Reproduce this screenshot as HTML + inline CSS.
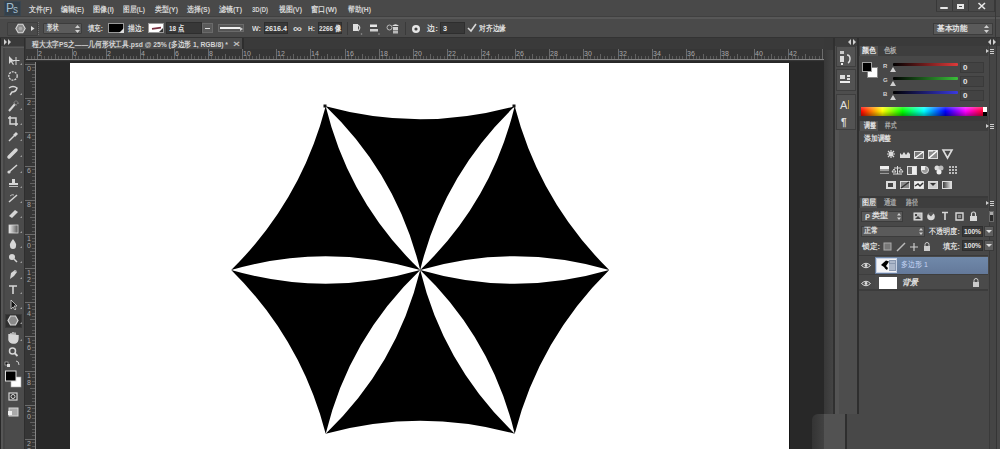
<!DOCTYPE html>
<html><head><meta charset="utf-8">
<style>
*{margin:0;padding:0;box-sizing:border-box}
html,body{width:1000px;height:449px;overflow:hidden;background:#282828;font-family:"Liberation Sans",sans-serif;color:#d8d8d8;position:relative}
.a{position:absolute}
.t{position:absolute;white-space:nowrap;font-weight:bold}
</style></head><body>
<div class="a" style="left:0px;top:0px;width:1000px;height:17px;background:#494949"></div>
<div class="a" style="left:0px;top:16px;width:1000px;height:1px;background:#404040"></div>
<div class="a" style="left:4px;top:1px;width:17px;height:15px;background:#34404a;border:1px solid #3a4650"></div>
<div id="t1" class="t" style="left:6px;top:1px;font-size:12px;line-height:14px;color:#a2bccc;font-weight:normal">P</div>
<div id="t2" class="t" style="left:13px;top:4px;font-size:10px;line-height:12px;color:#a2bccc;font-weight:normal">s</div>
<div id="t3" class="t" style="left:29px;top:5px;font-size:8px;line-height:10px;color:#d4d4d4;transform:scaleX(0.877);transform-origin:0 0;">文件(F)</div>
<div id="t4" class="t" style="left:61px;top:5px;font-size:8px;line-height:10px;color:#d4d4d4;transform:scaleX(0.862);transform-origin:0 0;">编辑(E)</div>
<div id="t5" class="t" style="left:93px;top:5px;font-size:8px;line-height:10px;color:#d4d4d4;transform:scaleX(0.891);transform-origin:0 0;">图像(I)</div>
<div id="t6" class="t" style="left:123px;top:5px;font-size:8px;line-height:10px;color:#d4d4d4;transform:scaleX(0.839);transform-origin:0 0;">图层(L)</div>
<div id="t7" class="t" style="left:155px;top:5px;font-size:8px;line-height:10px;color:#d4d4d4;transform:scaleX(0.862);transform-origin:0 0;">类型(Y)</div>
<div id="t8" class="t" style="left:187px;top:5px;font-size:8px;line-height:10px;color:#d4d4d4;transform:scaleX(0.862);transform-origin:0 0;">选择(S)</div>
<div id="t9" class="t" style="left:219px;top:5px;font-size:8px;line-height:10px;color:#d4d4d4;transform:scaleX(0.877);transform-origin:0 0;">滤镜(T)</div>
<div id="t10" class="t" style="left:252px;top:5px;font-size:8px;line-height:10px;color:#d4d4d4;transform:scaleX(0.750);transform-origin:0 0;">3D(D)</div>
<div id="t11" class="t" style="left:279px;top:5px;font-size:8px;line-height:10px;color:#d4d4d4;transform:scaleX(0.862);transform-origin:0 0;">视图(V)</div>
<div id="t12" class="t" style="left:311px;top:5px;font-size:8px;line-height:10px;color:#d4d4d4;transform:scaleX(0.900);transform-origin:0 0;">窗口(W)</div>
<div id="t13" class="t" style="left:348px;top:5px;font-size:8px;line-height:10px;color:#d4d4d4;transform:scaleX(0.848);transform-origin:0 0;">帮助(H)</div>
<div class="a" style="left:936px;top:0px;width:1px;height:12px;background:#383838"></div>
<div class="a" style="left:952px;top:0px;width:1px;height:12px;background:#383838"></div>
<div class="a" style="left:968px;top:0px;width:1px;height:12px;background:#383838"></div>
<div class="a" style="left:994px;top:0px;width:1px;height:12px;background:#383838"></div>
<div class="a" style="left:936px;top:11px;width:58px;height:1px;background:#3c3c3c"></div>
<div class="a" style="left:940px;top:7px;width:8px;height:2px;background:#e8e8e8;border-radius:1px"></div>
<div class="a" style="left:957px;top:4px;width:7px;height:5px;border:2px solid #e8e8e8"></div>
<svg class="a" style="left:977px;top:2px" width="10" height="8"><path d="M1.5 1 L8 7 M8 1 L1.5 7" stroke="#e8e8e8" stroke-width="1.6"/></svg>
<div class="a" style="left:0px;top:17px;width:1000px;height:21px;background:#4a4a4a;border-top:2px solid #575757;border-bottom:1px solid #333"></div>
<div class="a" style="left:7px;top:22px;width:31px;height:14px;border:1px solid #3e3e3e;border-radius:1px"></div>
<svg class="a" style="left:15px;top:23px" width="11" height="11"><path d="M3.2 1.2 L7.8 1.2 L10.2 5.5 L7.8 9.8 L3.2 9.8 L0.8 5.5Z" fill="#8a8a8a" stroke="#d6d6d6" stroke-width="1.1"/><circle cx="5.5" cy="5.5" r="1.8" fill="#a8a8a8"/></svg>
<svg class="a" style="left:31px;top:26px" width="4" height="5"><path d="M0 0 L3.5 2.5 L0 5Z" fill="#e0e0e0"/></svg>
<div class="a" style="left:38px;top:22px;width:1px;height:13px;border-left:1px dotted #707070"></div>
<div class="a" style="left:43px;top:23px;width:39px;height:11px;background:#5c5c5c;border:1px solid #3c3c3c;border-radius:1px"></div>
<div id="t14" class="t" style="left:47px;top:23px;font-size:8px;line-height:10px;color:#e0e0e0;transform:scaleX(0.688);transform-origin:0 0;">形状</div>
<svg class="a" style="left:75px;top:25px" width="5" height="8"><path d="M0 3 L2.5 0 L5 3Z M0 5 L2.5 8 L5 5Z" fill="#cfcfcf"/></svg>
<div id="t15" class="t" style="left:88px;top:24px;font-size:8px;line-height:10px;color:#dcdcdc;transform:scaleX(0.803);transform-origin:0 0;">填充:</div>
<div class="a" style="left:108px;top:23px;width:16px;height:10px;background:#000;border:1px solid #9a9a9a"></div>
<svg class="a" style="left:119px;top:28px" width="5" height="5"><path d="M5 0 L5 5 L0 5Z" fill="#ddd"/></svg>
<div id="t16" class="t" style="left:128px;top:24px;font-size:8px;line-height:10px;color:#dcdcdc;transform:scaleX(0.857);transform-origin:0 0;">描边:</div>
<div class="a" style="left:148px;top:23px;width:16px;height:10px;background:#fff;border:1px solid #9a9a9a"></div>
<svg class="a" style="left:149px;top:24px" width="14" height="8"><path d="M3 4.8 L12 3.6" stroke="#7a3040" stroke-width="1.8"/><path d="M14 4 L14 8 L10 8Z" fill="#333"/></svg>
<div class="a" style="left:166px;top:22px;width:36px;height:12px;background:#383838;border:1px solid #2e2e2e"></div>
<div id="t17" class="t" style="left:169px;top:24px;font-size:8px;line-height:10px;color:#e8e8e8;transform:scaleX(0.784);transform-origin:0 0;">18 点</div>
<div class="a" style="left:202px;top:23px;width:11px;height:10px;background:#5a5a5a;border:1px solid #6a6a6a"></div>
<div class="a" style="left:205px;top:28px;width:5px;height:1px;background:#ddd"></div>
<div class="a" style="left:218px;top:24px;width:26px;height:8px;background:#555;border:1px solid #6a6a6a"></div>
<div class="a" style="left:220px;top:27px;width:20px;height:2px;background:#f0f0f0"></div>
<svg class="a" style="left:240px;top:27px" width="3" height="4"><path d="M0 0 L3 2 L0 4Z" fill="#ccc"/></svg>
<div id="t18" class="t" style="left:252px;top:24px;font-size:8px;line-height:10px;color:#dcdcdc;transform:scaleX(0.893);transform-origin:0 0;">W:</div>
<div class="a" style="left:264px;top:22px;width:24px;height:12px;background:#383838;border:1px solid #2e2e2e"></div>
<div id="t19" class="t" style="left:265px;top:24px;font-size:8px;line-height:10px;color:#e8e8e8;transform:scaleX(0.899);transform-origin:0 0;">2616.4</div>
<div id="t20" class="t" style="left:293px;top:23px;font-size:10px;line-height:12px;color:#d8d8d8;transform:scaleX(1.260);transform-origin:0 0;">∞</div>
<div id="t21" class="t" style="left:308px;top:24px;font-size:8px;line-height:10px;color:#dcdcdc;transform:scaleX(0.828);transform-origin:0 0;">H:</div>
<div class="a" style="left:318px;top:22px;width:24px;height:12px;background:#383838;border:1px solid #2e2e2e"></div>
<div id="t22" class="t" style="left:319px;top:24px;font-size:8px;line-height:10px;color:#e8e8e8;transform:scaleX(0.785);transform-origin:0 0;">2266 像</div>
<div class="a" style="left:347px;top:22px;width:1px;height:13px;background:#3a3a3a"></div>
<svg class="a" style="left:352px;top:23px" width="12" height="12"><rect x="1" y="1" width="5" height="7" fill="#e0e0e0"/><path d="M6 2 Q9.5 4.5 6 8" stroke="#cfcfcf" stroke-width="1.3" fill="none"/><circle cx="9.5" cy="11" r="0.8" fill="#999"/></svg>
<svg class="a" style="left:368px;top:23px" width="12" height="12"><rect x="2" y="1.5" width="7" height="2.5" fill="#e6e6e6"/><rect x="2" y="6" width="8" height="2.5" fill="#d0d0d0"/><circle cx="11" cy="11" r="0.8" fill="#999"/></svg>
<svg class="a" style="left:386px;top:22px" width="14" height="13"><circle cx="3.5" cy="5.5" r="2.5" fill="none" stroke="#bbb" stroke-width="1"/><path d="M6 4 Q9.5 0.5 13 4 Z" fill="#e0e0e0"/><rect x="7" y="5" width="5" height="3" fill="#d0d0d0"/><rect x="7" y="8.5" width="5" height="3" fill="#b8b8b8"/></svg>
<div class="a" style="left:405px;top:22px;width:1px;height:13px;background:#3a3a3a"></div>
<svg class="a" style="left:411px;top:24px" width="10" height="10"><circle cx="5" cy="5" r="4" fill="#e6e6e6"/><circle cx="5" cy="5" r="1.6" fill="#444"/></svg>
<div id="t23" class="t" style="left:427px;top:24px;font-size:8px;line-height:10px;color:#dcdcdc;transform:scaleX(1.031);transform-origin:0 0;">边:</div>
<div class="a" style="left:440px;top:22px;width:25px;height:12px;background:#383838;border:1px solid #2e2e2e"></div>
<div id="t24" class="t" style="left:443px;top:24px;font-size:8px;line-height:10px;color:#e8e8e8;transform:scaleX(0.898);transform-origin:0 0;">3</div>
<svg class="a" style="left:467px;top:23px" width="10" height="10"><path d="M1 5 L4 8 L9 1" fill="none" stroke="#d8d8d8" stroke-width="1.6"/></svg>
<div id="t25" class="t" style="left:479px;top:24px;font-size:8px;line-height:10px;color:#dcdcdc;transform:scaleX(0.844);transform-origin:0 0;">对齐边缘</div>
<div class="a" style="left:933px;top:23px;width:60px;height:12px;background:#5a5a5a;border:1px solid #3c3c3c"></div>
<div id="t26" class="t" style="left:937px;top:24px;font-size:8px;line-height:10px;color:#e6e6e6;transform:scaleX(0.938);transform-origin:0 0;">基本功能</div>
<svg class="a" style="left:984px;top:25px" width="5" height="8"><path d="M0 3 L2.5 0 L5 3Z M0 5 L2.5 8 L5 5Z" fill="#cfcfcf"/></svg>
<div class="a" style="left:995px;top:0px;width:1px;height:38px;background:#383838"></div>
<div class="a" style="left:1px;top:38px;width:24px;height:411px;background:#4b4b4b"></div>
<div class="a" style="left:1px;top:38px;width:2px;height:411px;background:#565656"></div>
<div class="a" style="left:3px;top:38px;width:2px;height:411px;background:#454545"></div>
<div class="a" style="left:24px;top:38px;width:1px;height:411px;background:#2e2e2e"></div>
<div class="a" style="left:1px;top:38px;width:23px;height:8px;background:#3a3a3a"></div>
<svg class="a" style="left:4px;top:39px" width="9" height="6"><path d="M0 0 L3 3 L0 6Z M4 0 L7 3 L4 6Z" fill="#d0d0d0"/></svg>
<div class="a" style="left:3px;top:47px;width:21px;height:1px;background:#5a5a5a"></div>
<div class="a" style="left:5px;top:314px;width:17px;height:14px;background:#2f2f2f;border:1px solid #3a3a3a"></div>
<svg class="a" style="left:0;top:0" width="30" height="449"><defs><linearGradient id="gr"><stop offset="0" stop-color="#eee"/><stop offset="1" stop-color="#555"/></linearGradient></defs><path d="M9 56 L9 64 L11 62 L13 65 L14 64.3 L12 61.5 L14.5 61.5Z" fill="#d6d6d6"/><path d="M16 57 V65 M12.5 60.5 H19.5" stroke="#d6d6d6" stroke-width="1"/><circle cx="13" cy="76" r="4.2" fill="none" stroke="#d6d6d6" stroke-width="1.3" stroke-dasharray="2 1"/><path d="M9 88 Q13 85 17 88 Q16 92 12 92 L10 95" fill="none" stroke="#d6d6d6" stroke-width="1.5"/><path d="M9 111 L15 104" stroke="#d6d6d6" stroke-width="2"/><circle cx="16" cy="103" r="2" fill="none" stroke="#aaa" stroke-dasharray="1 1"/><path d="M10 116 V124 H18 M8 118 H16 V126" fill="none" stroke="#d6d6d6" stroke-width="1.5"/><path d="M9 141 L14 136" stroke="#d6d6d6" stroke-width="1.5"/><path d="M13 135 L16 132 L18 134 L15 137Z" fill="#d6d6d6"/><path d="M9 157 L16 150" stroke="#d6d6d6" stroke-width="3.5" stroke-linecap="round"/><path d="M9 172 L17 165" stroke="#d6d6d6" stroke-width="1.5"/><circle cx="9" cy="172" r="1.6" fill="#d6d6d6"/><rect x="12" y="179" width="3" height="4" fill="#d6d6d6"/><rect x="9" y="183" width="9" height="2" fill="#d6d6d6"/><rect x="9" y="186" width="9" height="1" fill="#bbb"/><path d="M9 202 L17 195" stroke="#d6d6d6" stroke-width="1.5"/><path d="M10 196 Q12 194 14 195" stroke="#bbb" fill="none"/><path d="M9 216 L15 210 L18 212 L12 218Z" fill="#d6d6d6"/><rect x="9" y="225" width="9" height="8" fill="url(#gr)" stroke="#d6d6d6" stroke-width="0.8"/><path d="M13 239 Q17 244 16 246 A3 3 0 0 1 10 246 Q9 244 13 239Z" fill="#d6d6d6"/><circle cx="12" cy="257" r="3" fill="#d6d6d6"/><path d="M14 259 L17 262" stroke="#d6d6d6" stroke-width="1.5"/><path d="M10 279 L11 273 L15 270 L17 272 L14 276Z" fill="#d6d6d6"/><circle cx="15.5" cy="271" r="1" fill="#aaa"/><path d="M9 286 H17 M13 286 V294" stroke="#d6d6d6" stroke-width="1.6"/><path d="M11 300 L11 309 L13 307 L15 310 L16 309 L14 306 L17 306Z" fill="#111" stroke="#d6d6d6" stroke-width="0.8"/><path d="M10.5 316 L15.5 316 L18 320.5 L15.5 325 L10.5 325 L8 320.5Z" fill="#8a8a8a" stroke="#d6d6d6" stroke-width="1.2"/><path d="M9 334 V340 Q10 343 13 343 H15 Q18 342 18 338 V335 M11 333 V338 M13 332 V338 M15 332.5 V338" fill="#d6d6d6" stroke="#d6d6d6" stroke-width="1.4"/><circle cx="12.5" cy="351" r="3" fill="none" stroke="#d6d6d6" stroke-width="1.5"/><path d="M14.5 353 L17.5 356" stroke="#d6d6d6" stroke-width="1.8"/><rect x="5" y="362" width="3" height="3" fill="#111" stroke="#ccc" stroke-width="0.6"/><rect x="7" y="364" width="3" height="3" fill="#ddd"/><path d="M16 361 Q19 361 19 365" stroke="#ccc" fill="none"/><rect x="11" y="377" width="10" height="10" fill="#fff" stroke="#aaa" stroke-width="0.6"/><rect x="5.5" y="371" width="10.5" height="10" fill="#000" stroke="#ddd" stroke-width="1"/><rect x="9" y="393" width="8" height="7" fill="#333" stroke="#d6d6d6" stroke-width="1.2"/><circle cx="13" cy="396.5" r="2" fill="none" stroke="#d6d6d6" stroke-width="1"/><rect x="9" y="408" width="9" height="8" fill="#aaa" stroke="#d6d6d6" stroke-width="1"/><rect x="8" y="411" width="4" height="4" fill="#eee"/><path d="M20 65 L22 63 L22 65Z" fill="#9a9a9a"/><path d="M20 95 L22 93 L22 95Z" fill="#9a9a9a"/><path d="M20 110 L22 108 L22 110Z" fill="#9a9a9a"/><path d="M20 125 L22 123 L22 125Z" fill="#9a9a9a"/><path d="M20 141 L22 139 L22 141Z" fill="#9a9a9a"/><path d="M20 157 L22 155 L22 157Z" fill="#9a9a9a"/><path d="M20 173 L22 171 L22 173Z" fill="#9a9a9a"/><path d="M20 188 L22 186 L22 188Z" fill="#9a9a9a"/><path d="M20 203 L22 201 L22 203Z" fill="#9a9a9a"/><path d="M20 218 L22 216 L22 218Z" fill="#9a9a9a"/><path d="M20 233 L22 231 L22 233Z" fill="#9a9a9a"/><path d="M20 248 L22 246 L22 248Z" fill="#9a9a9a"/><path d="M20 263 L22 261 L22 263Z" fill="#9a9a9a"/><path d="M20 279 L22 277 L22 279Z" fill="#9a9a9a"/><path d="M20 294 L22 292 L22 294Z" fill="#9a9a9a"/><path d="M20 309 L22 307 L22 309Z" fill="#9a9a9a"/><path d="M20 324 L22 322 L22 324Z" fill="#9a9a9a"/><path d="M20 341 L22 339 L22 341Z" fill="#9a9a9a"/></svg>
<div class="a" style="left:25px;top:38px;width:799px;height:11px;background:#3a3a3a"></div>
<div class="a" style="left:26px;top:38px;width:216px;height:11px;background:#4b4b4b"></div>
<div class="a" style="left:242px;top:38px;width:2px;height:11px;background:#2e2e2e"></div>
<div id="t27" class="t" style="left:32px;top:40px;font-size:8px;line-height:10px;color:#d4d4d4;transform:scaleX(0.845);transform-origin:0 0;">程大太字PS之——几何形状工具.psd @ 25% (多边形 1, RGB/8) *</div>
<div id="t28" class="t" style="left:233px;top:39px;font-size:9px;line-height:11px;color:#bdbdbd;transform:scaleX(1.329);transform-origin:0 0;">×</div>
<div class="a" style="left:25px;top:49px;width:799px;height:13px;background:#363636"></div>
<div class="a" style="left:25px;top:61px;width:799px;height:1px;background:#2a2a2a"></div>
<div class="a" style="left:25px;top:62px;width:11px;height:387px;background:#363636"></div>
<svg class="a" style="left:0;top:0" width="1000" height="449"><rect x="27" y="56" width="1" height="3" fill="#5a5a5a"/><rect x="31" y="56" width="1" height="3" fill="#5a5a5a"/><rect x="34" y="56" width="1" height="3" fill="#5a5a5a"/><rect x="37" y="49" width="1" height="10" fill="#6c6c6c"/><rect x="41" y="56" width="1" height="3" fill="#5a5a5a"/><rect x="44" y="56" width="1" height="3" fill="#5a5a5a"/><rect x="48" y="56" width="1" height="3" fill="#5a5a5a"/><rect x="51" y="56" width="1" height="3" fill="#5a5a5a"/><rect x="55" y="54" width="1" height="5" fill="#626262"/><rect x="58" y="56" width="1" height="3" fill="#5a5a5a"/><rect x="61" y="56" width="1" height="3" fill="#5a5a5a"/><rect x="65" y="56" width="1" height="3" fill="#5a5a5a"/><rect x="68" y="56" width="1" height="3" fill="#5a5a5a"/><rect x="72" y="49" width="1" height="10" fill="#6c6c6c"/><rect x="75" y="56" width="1" height="3" fill="#5a5a5a"/><rect x="78" y="56" width="1" height="3" fill="#5a5a5a"/><rect x="82" y="56" width="1" height="3" fill="#5a5a5a"/><rect x="85" y="56" width="1" height="3" fill="#5a5a5a"/><rect x="89" y="54" width="1" height="5" fill="#626262"/><rect x="92" y="56" width="1" height="3" fill="#5a5a5a"/><rect x="95" y="56" width="1" height="3" fill="#5a5a5a"/><rect x="99" y="56" width="1" height="3" fill="#5a5a5a"/><rect x="102" y="56" width="1" height="3" fill="#5a5a5a"/><rect x="106" y="49" width="1" height="10" fill="#6c6c6c"/><rect x="109" y="56" width="1" height="3" fill="#5a5a5a"/><rect x="113" y="56" width="1" height="3" fill="#5a5a5a"/><rect x="116" y="56" width="1" height="3" fill="#5a5a5a"/><rect x="119" y="56" width="1" height="3" fill="#5a5a5a"/><rect x="123" y="54" width="1" height="5" fill="#626262"/><rect x="126" y="56" width="1" height="3" fill="#5a5a5a"/><rect x="130" y="56" width="1" height="3" fill="#5a5a5a"/><rect x="133" y="56" width="1" height="3" fill="#5a5a5a"/><rect x="136" y="56" width="1" height="3" fill="#5a5a5a"/><rect x="140" y="49" width="1" height="10" fill="#6c6c6c"/><rect x="143" y="56" width="1" height="3" fill="#5a5a5a"/><rect x="147" y="56" width="1" height="3" fill="#5a5a5a"/><rect x="150" y="56" width="1" height="3" fill="#5a5a5a"/><rect x="153" y="56" width="1" height="3" fill="#5a5a5a"/><rect x="157" y="54" width="1" height="5" fill="#626262"/><rect x="160" y="56" width="1" height="3" fill="#5a5a5a"/><rect x="164" y="56" width="1" height="3" fill="#5a5a5a"/><rect x="167" y="56" width="1" height="3" fill="#5a5a5a"/><rect x="171" y="56" width="1" height="3" fill="#5a5a5a"/><rect x="174" y="49" width="1" height="10" fill="#6c6c6c"/><rect x="177" y="56" width="1" height="3" fill="#5a5a5a"/><rect x="181" y="56" width="1" height="3" fill="#5a5a5a"/><rect x="184" y="56" width="1" height="3" fill="#5a5a5a"/><rect x="188" y="56" width="1" height="3" fill="#5a5a5a"/><rect x="191" y="54" width="1" height="5" fill="#626262"/><rect x="194" y="56" width="1" height="3" fill="#5a5a5a"/><rect x="198" y="56" width="1" height="3" fill="#5a5a5a"/><rect x="201" y="56" width="1" height="3" fill="#5a5a5a"/><rect x="205" y="56" width="1" height="3" fill="#5a5a5a"/><rect x="208" y="49" width="1" height="10" fill="#6c6c6c"/><rect x="211" y="56" width="1" height="3" fill="#5a5a5a"/><rect x="215" y="56" width="1" height="3" fill="#5a5a5a"/><rect x="218" y="56" width="1" height="3" fill="#5a5a5a"/><rect x="222" y="56" width="1" height="3" fill="#5a5a5a"/><rect x="225" y="54" width="1" height="5" fill="#626262"/><rect x="229" y="56" width="1" height="3" fill="#5a5a5a"/><rect x="232" y="56" width="1" height="3" fill="#5a5a5a"/><rect x="235" y="56" width="1" height="3" fill="#5a5a5a"/><rect x="239" y="56" width="1" height="3" fill="#5a5a5a"/><rect x="242" y="49" width="1" height="10" fill="#6c6c6c"/><rect x="246" y="56" width="1" height="3" fill="#5a5a5a"/><rect x="249" y="56" width="1" height="3" fill="#5a5a5a"/><rect x="252" y="56" width="1" height="3" fill="#5a5a5a"/><rect x="256" y="56" width="1" height="3" fill="#5a5a5a"/><rect x="259" y="54" width="1" height="5" fill="#626262"/><rect x="263" y="56" width="1" height="3" fill="#5a5a5a"/><rect x="266" y="56" width="1" height="3" fill="#5a5a5a"/><rect x="269" y="56" width="1" height="3" fill="#5a5a5a"/><rect x="273" y="56" width="1" height="3" fill="#5a5a5a"/><rect x="276" y="49" width="1" height="10" fill="#6c6c6c"/><rect x="280" y="56" width="1" height="3" fill="#5a5a5a"/><rect x="283" y="56" width="1" height="3" fill="#5a5a5a"/><rect x="287" y="56" width="1" height="3" fill="#5a5a5a"/><rect x="290" y="56" width="1" height="3" fill="#5a5a5a"/><rect x="293" y="54" width="1" height="5" fill="#626262"/><rect x="297" y="56" width="1" height="3" fill="#5a5a5a"/><rect x="300" y="56" width="1" height="3" fill="#5a5a5a"/><rect x="304" y="56" width="1" height="3" fill="#5a5a5a"/><rect x="307" y="56" width="1" height="3" fill="#5a5a5a"/><rect x="310" y="49" width="1" height="10" fill="#6c6c6c"/><rect x="314" y="56" width="1" height="3" fill="#5a5a5a"/><rect x="317" y="56" width="1" height="3" fill="#5a5a5a"/><rect x="321" y="56" width="1" height="3" fill="#5a5a5a"/><rect x="324" y="56" width="1" height="3" fill="#5a5a5a"/><rect x="327" y="54" width="1" height="5" fill="#626262"/><rect x="331" y="56" width="1" height="3" fill="#5a5a5a"/><rect x="334" y="56" width="1" height="3" fill="#5a5a5a"/><rect x="338" y="56" width="1" height="3" fill="#5a5a5a"/><rect x="341" y="56" width="1" height="3" fill="#5a5a5a"/><rect x="345" y="49" width="1" height="10" fill="#6c6c6c"/><rect x="348" y="56" width="1" height="3" fill="#5a5a5a"/><rect x="351" y="56" width="1" height="3" fill="#5a5a5a"/><rect x="355" y="56" width="1" height="3" fill="#5a5a5a"/><rect x="358" y="56" width="1" height="3" fill="#5a5a5a"/><rect x="362" y="54" width="1" height="5" fill="#626262"/><rect x="365" y="56" width="1" height="3" fill="#5a5a5a"/><rect x="368" y="56" width="1" height="3" fill="#5a5a5a"/><rect x="372" y="56" width="1" height="3" fill="#5a5a5a"/><rect x="375" y="56" width="1" height="3" fill="#5a5a5a"/><rect x="379" y="49" width="1" height="10" fill="#6c6c6c"/><rect x="382" y="56" width="1" height="3" fill="#5a5a5a"/><rect x="386" y="56" width="1" height="3" fill="#5a5a5a"/><rect x="389" y="56" width="1" height="3" fill="#5a5a5a"/><rect x="392" y="56" width="1" height="3" fill="#5a5a5a"/><rect x="396" y="54" width="1" height="5" fill="#626262"/><rect x="399" y="56" width="1" height="3" fill="#5a5a5a"/><rect x="403" y="56" width="1" height="3" fill="#5a5a5a"/><rect x="406" y="56" width="1" height="3" fill="#5a5a5a"/><rect x="409" y="56" width="1" height="3" fill="#5a5a5a"/><rect x="413" y="49" width="1" height="10" fill="#6c6c6c"/><rect x="416" y="56" width="1" height="3" fill="#5a5a5a"/><rect x="420" y="56" width="1" height="3" fill="#5a5a5a"/><rect x="423" y="56" width="1" height="3" fill="#5a5a5a"/><rect x="426" y="56" width="1" height="3" fill="#5a5a5a"/><rect x="430" y="54" width="1" height="5" fill="#626262"/><rect x="433" y="56" width="1" height="3" fill="#5a5a5a"/><rect x="437" y="56" width="1" height="3" fill="#5a5a5a"/><rect x="440" y="56" width="1" height="3" fill="#5a5a5a"/><rect x="444" y="56" width="1" height="3" fill="#5a5a5a"/><rect x="447" y="49" width="1" height="10" fill="#6c6c6c"/><rect x="450" y="56" width="1" height="3" fill="#5a5a5a"/><rect x="454" y="56" width="1" height="3" fill="#5a5a5a"/><rect x="457" y="56" width="1" height="3" fill="#5a5a5a"/><rect x="461" y="56" width="1" height="3" fill="#5a5a5a"/><rect x="464" y="54" width="1" height="5" fill="#626262"/><rect x="467" y="56" width="1" height="3" fill="#5a5a5a"/><rect x="471" y="56" width="1" height="3" fill="#5a5a5a"/><rect x="474" y="56" width="1" height="3" fill="#5a5a5a"/><rect x="478" y="56" width="1" height="3" fill="#5a5a5a"/><rect x="481" y="49" width="1" height="10" fill="#6c6c6c"/><rect x="484" y="56" width="1" height="3" fill="#5a5a5a"/><rect x="488" y="56" width="1" height="3" fill="#5a5a5a"/><rect x="491" y="56" width="1" height="3" fill="#5a5a5a"/><rect x="495" y="56" width="1" height="3" fill="#5a5a5a"/><rect x="498" y="54" width="1" height="5" fill="#626262"/><rect x="502" y="56" width="1" height="3" fill="#5a5a5a"/><rect x="505" y="56" width="1" height="3" fill="#5a5a5a"/><rect x="508" y="56" width="1" height="3" fill="#5a5a5a"/><rect x="512" y="56" width="1" height="3" fill="#5a5a5a"/><rect x="515" y="49" width="1" height="10" fill="#6c6c6c"/><rect x="519" y="56" width="1" height="3" fill="#5a5a5a"/><rect x="522" y="56" width="1" height="3" fill="#5a5a5a"/><rect x="525" y="56" width="1" height="3" fill="#5a5a5a"/><rect x="529" y="56" width="1" height="3" fill="#5a5a5a"/><rect x="532" y="54" width="1" height="5" fill="#626262"/><rect x="536" y="56" width="1" height="3" fill="#5a5a5a"/><rect x="539" y="56" width="1" height="3" fill="#5a5a5a"/><rect x="542" y="56" width="1" height="3" fill="#5a5a5a"/><rect x="546" y="56" width="1" height="3" fill="#5a5a5a"/><rect x="549" y="49" width="1" height="10" fill="#6c6c6c"/><rect x="553" y="56" width="1" height="3" fill="#5a5a5a"/><rect x="556" y="56" width="1" height="3" fill="#5a5a5a"/><rect x="560" y="56" width="1" height="3" fill="#5a5a5a"/><rect x="563" y="56" width="1" height="3" fill="#5a5a5a"/><rect x="566" y="54" width="1" height="5" fill="#626262"/><rect x="570" y="56" width="1" height="3" fill="#5a5a5a"/><rect x="573" y="56" width="1" height="3" fill="#5a5a5a"/><rect x="577" y="56" width="1" height="3" fill="#5a5a5a"/><rect x="580" y="56" width="1" height="3" fill="#5a5a5a"/><rect x="583" y="49" width="1" height="10" fill="#6c6c6c"/><rect x="587" y="56" width="1" height="3" fill="#5a5a5a"/><rect x="590" y="56" width="1" height="3" fill="#5a5a5a"/><rect x="594" y="56" width="1" height="3" fill="#5a5a5a"/><rect x="597" y="56" width="1" height="3" fill="#5a5a5a"/><rect x="600" y="54" width="1" height="5" fill="#626262"/><rect x="604" y="56" width="1" height="3" fill="#5a5a5a"/><rect x="607" y="56" width="1" height="3" fill="#5a5a5a"/><rect x="611" y="56" width="1" height="3" fill="#5a5a5a"/><rect x="614" y="56" width="1" height="3" fill="#5a5a5a"/><rect x="618" y="49" width="1" height="10" fill="#6c6c6c"/><rect x="621" y="56" width="1" height="3" fill="#5a5a5a"/><rect x="624" y="56" width="1" height="3" fill="#5a5a5a"/><rect x="628" y="56" width="1" height="3" fill="#5a5a5a"/><rect x="631" y="56" width="1" height="3" fill="#5a5a5a"/><rect x="635" y="54" width="1" height="5" fill="#626262"/><rect x="638" y="56" width="1" height="3" fill="#5a5a5a"/><rect x="641" y="56" width="1" height="3" fill="#5a5a5a"/><rect x="645" y="56" width="1" height="3" fill="#5a5a5a"/><rect x="648" y="56" width="1" height="3" fill="#5a5a5a"/><rect x="652" y="49" width="1" height="10" fill="#6c6c6c"/><rect x="655" y="56" width="1" height="3" fill="#5a5a5a"/><rect x="658" y="56" width="1" height="3" fill="#5a5a5a"/><rect x="662" y="56" width="1" height="3" fill="#5a5a5a"/><rect x="665" y="56" width="1" height="3" fill="#5a5a5a"/><rect x="669" y="54" width="1" height="5" fill="#626262"/><rect x="672" y="56" width="1" height="3" fill="#5a5a5a"/><rect x="676" y="56" width="1" height="3" fill="#5a5a5a"/><rect x="679" y="56" width="1" height="3" fill="#5a5a5a"/><rect x="682" y="56" width="1" height="3" fill="#5a5a5a"/><rect x="686" y="49" width="1" height="10" fill="#6c6c6c"/><rect x="689" y="56" width="1" height="3" fill="#5a5a5a"/><rect x="693" y="56" width="1" height="3" fill="#5a5a5a"/><rect x="696" y="56" width="1" height="3" fill="#5a5a5a"/><rect x="699" y="56" width="1" height="3" fill="#5a5a5a"/><rect x="703" y="54" width="1" height="5" fill="#626262"/><rect x="706" y="56" width="1" height="3" fill="#5a5a5a"/><rect x="710" y="56" width="1" height="3" fill="#5a5a5a"/><rect x="713" y="56" width="1" height="3" fill="#5a5a5a"/><rect x="716" y="56" width="1" height="3" fill="#5a5a5a"/><rect x="720" y="49" width="1" height="10" fill="#6c6c6c"/><rect x="723" y="56" width="1" height="3" fill="#5a5a5a"/><rect x="727" y="56" width="1" height="3" fill="#5a5a5a"/><rect x="730" y="56" width="1" height="3" fill="#5a5a5a"/><rect x="734" y="56" width="1" height="3" fill="#5a5a5a"/><rect x="737" y="54" width="1" height="5" fill="#626262"/><rect x="740" y="56" width="1" height="3" fill="#5a5a5a"/><rect x="744" y="56" width="1" height="3" fill="#5a5a5a"/><rect x="747" y="56" width="1" height="3" fill="#5a5a5a"/><rect x="751" y="56" width="1" height="3" fill="#5a5a5a"/><rect x="754" y="49" width="1" height="10" fill="#6c6c6c"/><rect x="757" y="56" width="1" height="3" fill="#5a5a5a"/><rect x="761" y="56" width="1" height="3" fill="#5a5a5a"/><rect x="764" y="56" width="1" height="3" fill="#5a5a5a"/><rect x="768" y="56" width="1" height="3" fill="#5a5a5a"/><rect x="771" y="54" width="1" height="5" fill="#626262"/><rect x="774" y="56" width="1" height="3" fill="#5a5a5a"/><rect x="778" y="56" width="1" height="3" fill="#5a5a5a"/><rect x="781" y="56" width="1" height="3" fill="#5a5a5a"/><rect x="785" y="56" width="1" height="3" fill="#5a5a5a"/><rect x="788" y="49" width="1" height="10" fill="#6c6c6c"/><rect x="792" y="56" width="1" height="3" fill="#5a5a5a"/><rect x="795" y="56" width="1" height="3" fill="#5a5a5a"/><rect x="798" y="56" width="1" height="3" fill="#5a5a5a"/><rect x="802" y="56" width="1" height="3" fill="#5a5a5a"/><rect x="805" y="54" width="1" height="5" fill="#626262"/><rect x="809" y="56" width="1" height="3" fill="#5a5a5a"/><rect x="812" y="56" width="1" height="3" fill="#5a5a5a"/><rect x="815" y="56" width="1" height="3" fill="#5a5a5a"/><rect x="819" y="56" width="1" height="3" fill="#5a5a5a"/><rect x="822" y="49" width="1" height="10" fill="#6c6c6c"/><rect x="26" y="59" width="798" height="1" fill="#858585"/><rect x="25" y="64" width="10" height="1" fill="#6c6c6c"/><rect x="32" y="67" width="3" height="1" fill="#5a5a5a"/><rect x="32" y="70" width="3" height="1" fill="#5a5a5a"/><rect x="32" y="74" width="3" height="1" fill="#5a5a5a"/><rect x="32" y="77" width="3" height="1" fill="#5a5a5a"/><rect x="30" y="81" width="5" height="1" fill="#626262"/><rect x="32" y="84" width="3" height="1" fill="#5a5a5a"/><rect x="32" y="87" width="3" height="1" fill="#5a5a5a"/><rect x="32" y="91" width="3" height="1" fill="#5a5a5a"/><rect x="32" y="94" width="3" height="1" fill="#5a5a5a"/><rect x="25" y="98" width="10" height="1" fill="#6c6c6c"/><rect x="32" y="101" width="3" height="1" fill="#5a5a5a"/><rect x="32" y="104" width="3" height="1" fill="#5a5a5a"/><rect x="32" y="108" width="3" height="1" fill="#5a5a5a"/><rect x="32" y="111" width="3" height="1" fill="#5a5a5a"/><rect x="30" y="115" width="5" height="1" fill="#626262"/><rect x="32" y="118" width="3" height="1" fill="#5a5a5a"/><rect x="32" y="122" width="3" height="1" fill="#5a5a5a"/><rect x="32" y="125" width="3" height="1" fill="#5a5a5a"/><rect x="32" y="128" width="3" height="1" fill="#5a5a5a"/><rect x="25" y="132" width="10" height="1" fill="#6c6c6c"/><rect x="32" y="135" width="3" height="1" fill="#5a5a5a"/><rect x="32" y="139" width="3" height="1" fill="#5a5a5a"/><rect x="32" y="142" width="3" height="1" fill="#5a5a5a"/><rect x="32" y="145" width="3" height="1" fill="#5a5a5a"/><rect x="30" y="149" width="5" height="1" fill="#626262"/><rect x="32" y="152" width="3" height="1" fill="#5a5a5a"/><rect x="32" y="156" width="3" height="1" fill="#5a5a5a"/><rect x="32" y="159" width="3" height="1" fill="#5a5a5a"/><rect x="32" y="162" width="3" height="1" fill="#5a5a5a"/><rect x="25" y="166" width="10" height="1" fill="#6c6c6c"/><rect x="32" y="169" width="3" height="1" fill="#5a5a5a"/><rect x="32" y="173" width="3" height="1" fill="#5a5a5a"/><rect x="32" y="176" width="3" height="1" fill="#5a5a5a"/><rect x="32" y="180" width="3" height="1" fill="#5a5a5a"/><rect x="30" y="183" width="5" height="1" fill="#626262"/><rect x="32" y="186" width="3" height="1" fill="#5a5a5a"/><rect x="32" y="190" width="3" height="1" fill="#5a5a5a"/><rect x="32" y="193" width="3" height="1" fill="#5a5a5a"/><rect x="32" y="197" width="3" height="1" fill="#5a5a5a"/><rect x="25" y="200" width="10" height="1" fill="#6c6c6c"/><rect x="32" y="203" width="3" height="1" fill="#5a5a5a"/><rect x="32" y="207" width="3" height="1" fill="#5a5a5a"/><rect x="32" y="210" width="3" height="1" fill="#5a5a5a"/><rect x="32" y="214" width="3" height="1" fill="#5a5a5a"/><rect x="30" y="217" width="5" height="1" fill="#626262"/><rect x="32" y="220" width="3" height="1" fill="#5a5a5a"/><rect x="32" y="224" width="3" height="1" fill="#5a5a5a"/><rect x="32" y="227" width="3" height="1" fill="#5a5a5a"/><rect x="32" y="231" width="3" height="1" fill="#5a5a5a"/><rect x="25" y="234" width="10" height="1" fill="#6c6c6c"/><rect x="32" y="238" width="3" height="1" fill="#5a5a5a"/><rect x="32" y="241" width="3" height="1" fill="#5a5a5a"/><rect x="32" y="244" width="3" height="1" fill="#5a5a5a"/><rect x="32" y="248" width="3" height="1" fill="#5a5a5a"/><rect x="30" y="251" width="5" height="1" fill="#626262"/><rect x="32" y="255" width="3" height="1" fill="#5a5a5a"/><rect x="32" y="258" width="3" height="1" fill="#5a5a5a"/><rect x="32" y="261" width="3" height="1" fill="#5a5a5a"/><rect x="32" y="265" width="3" height="1" fill="#5a5a5a"/><rect x="25" y="268" width="10" height="1" fill="#6c6c6c"/><rect x="32" y="272" width="3" height="1" fill="#5a5a5a"/><rect x="32" y="275" width="3" height="1" fill="#5a5a5a"/><rect x="32" y="278" width="3" height="1" fill="#5a5a5a"/><rect x="32" y="282" width="3" height="1" fill="#5a5a5a"/><rect x="30" y="285" width="5" height="1" fill="#626262"/><rect x="32" y="289" width="3" height="1" fill="#5a5a5a"/><rect x="32" y="292" width="3" height="1" fill="#5a5a5a"/><rect x="32" y="296" width="3" height="1" fill="#5a5a5a"/><rect x="32" y="299" width="3" height="1" fill="#5a5a5a"/><rect x="25" y="302" width="10" height="1" fill="#6c6c6c"/><rect x="32" y="306" width="3" height="1" fill="#5a5a5a"/><rect x="32" y="309" width="3" height="1" fill="#5a5a5a"/><rect x="32" y="313" width="3" height="1" fill="#5a5a5a"/><rect x="32" y="316" width="3" height="1" fill="#5a5a5a"/><rect x="30" y="319" width="5" height="1" fill="#626262"/><rect x="32" y="323" width="3" height="1" fill="#5a5a5a"/><rect x="32" y="326" width="3" height="1" fill="#5a5a5a"/><rect x="32" y="330" width="3" height="1" fill="#5a5a5a"/><rect x="32" y="333" width="3" height="1" fill="#5a5a5a"/><rect x="25" y="336" width="10" height="1" fill="#6c6c6c"/><rect x="32" y="340" width="3" height="1" fill="#5a5a5a"/><rect x="32" y="343" width="3" height="1" fill="#5a5a5a"/><rect x="32" y="347" width="3" height="1" fill="#5a5a5a"/><rect x="32" y="350" width="3" height="1" fill="#5a5a5a"/><rect x="30" y="354" width="5" height="1" fill="#626262"/><rect x="32" y="357" width="3" height="1" fill="#5a5a5a"/><rect x="32" y="360" width="3" height="1" fill="#5a5a5a"/><rect x="32" y="364" width="3" height="1" fill="#5a5a5a"/><rect x="32" y="367" width="3" height="1" fill="#5a5a5a"/><rect x="25" y="371" width="10" height="1" fill="#6c6c6c"/><rect x="32" y="374" width="3" height="1" fill="#5a5a5a"/><rect x="32" y="377" width="3" height="1" fill="#5a5a5a"/><rect x="32" y="381" width="3" height="1" fill="#5a5a5a"/><rect x="32" y="384" width="3" height="1" fill="#5a5a5a"/><rect x="30" y="388" width="5" height="1" fill="#626262"/><rect x="32" y="391" width="3" height="1" fill="#5a5a5a"/><rect x="32" y="394" width="3" height="1" fill="#5a5a5a"/><rect x="32" y="398" width="3" height="1" fill="#5a5a5a"/><rect x="32" y="401" width="3" height="1" fill="#5a5a5a"/><rect x="25" y="405" width="10" height="1" fill="#6c6c6c"/><rect x="32" y="408" width="3" height="1" fill="#5a5a5a"/><rect x="32" y="412" width="3" height="1" fill="#5a5a5a"/><rect x="32" y="415" width="3" height="1" fill="#5a5a5a"/><rect x="32" y="418" width="3" height="1" fill="#5a5a5a"/><rect x="30" y="422" width="5" height="1" fill="#626262"/><rect x="32" y="425" width="3" height="1" fill="#5a5a5a"/><rect x="32" y="429" width="3" height="1" fill="#5a5a5a"/><rect x="32" y="432" width="3" height="1" fill="#5a5a5a"/><rect x="32" y="435" width="3" height="1" fill="#5a5a5a"/><rect x="25" y="439" width="10" height="1" fill="#6c6c6c"/><rect x="32" y="442" width="3" height="1" fill="#5a5a5a"/><rect x="32" y="446" width="3" height="1" fill="#5a5a5a"/><rect x="35" y="62" width="1" height="387" fill="#858585"/></svg>
<div id="t29" class="t" style="left:38px;top:49px;font-size:7px;line-height:9px;color:#a8a8a8;font-weight:normal">2</div>
<div id="t30" class="t" style="left:73px;top:49px;font-size:7px;line-height:9px;color:#a8a8a8;font-weight:normal">0</div>
<div id="t31" class="t" style="left:107px;top:49px;font-size:7px;line-height:9px;color:#a8a8a8;font-weight:normal">2</div>
<div id="t32" class="t" style="left:141px;top:49px;font-size:7px;line-height:9px;color:#a8a8a8;font-weight:normal">4</div>
<div id="t33" class="t" style="left:175px;top:49px;font-size:7px;line-height:9px;color:#a8a8a8;font-weight:normal">6</div>
<div id="t34" class="t" style="left:209px;top:49px;font-size:7px;line-height:9px;color:#a8a8a8;font-weight:normal">8</div>
<div id="t35" class="t" style="left:243px;top:49px;font-size:7px;line-height:9px;color:#a8a8a8;font-weight:normal">10</div>
<div id="t36" class="t" style="left:277px;top:49px;font-size:7px;line-height:9px;color:#a8a8a8;font-weight:normal">12</div>
<div id="t37" class="t" style="left:311px;top:49px;font-size:7px;line-height:9px;color:#a8a8a8;font-weight:normal">14</div>
<div id="t38" class="t" style="left:346px;top:49px;font-size:7px;line-height:9px;color:#a8a8a8;font-weight:normal">16</div>
<div id="t39" class="t" style="left:380px;top:49px;font-size:7px;line-height:9px;color:#a8a8a8;font-weight:normal">18</div>
<div id="t40" class="t" style="left:414px;top:49px;font-size:7px;line-height:9px;color:#a8a8a8;font-weight:normal">20</div>
<div id="t41" class="t" style="left:448px;top:49px;font-size:7px;line-height:9px;color:#a8a8a8;font-weight:normal">22</div>
<div id="t42" class="t" style="left:482px;top:49px;font-size:7px;line-height:9px;color:#a8a8a8;font-weight:normal">24</div>
<div id="t43" class="t" style="left:516px;top:49px;font-size:7px;line-height:9px;color:#a8a8a8;font-weight:normal">26</div>
<div id="t44" class="t" style="left:550px;top:49px;font-size:7px;line-height:9px;color:#a8a8a8;font-weight:normal">28</div>
<div id="t45" class="t" style="left:584px;top:49px;font-size:7px;line-height:9px;color:#a8a8a8;font-weight:normal">30</div>
<div id="t46" class="t" style="left:619px;top:49px;font-size:7px;line-height:9px;color:#a8a8a8;font-weight:normal">32</div>
<div id="t47" class="t" style="left:653px;top:49px;font-size:7px;line-height:9px;color:#a8a8a8;font-weight:normal">34</div>
<div id="t48" class="t" style="left:687px;top:49px;font-size:7px;line-height:9px;color:#a8a8a8;font-weight:normal">36</div>
<div id="t49" class="t" style="left:721px;top:49px;font-size:7px;line-height:9px;color:#a8a8a8;font-weight:normal">38</div>
<div id="t50" class="t" style="left:755px;top:49px;font-size:7px;line-height:9px;color:#a8a8a8;font-weight:normal">40</div>
<div id="t51" class="t" style="left:789px;top:49px;font-size:7px;line-height:9px;color:#a8a8a8;font-weight:normal">42</div>
<div class="t" style="left:27px;top:65px;font-size:7px;line-height:7px;color:#a8a8a8;font-weight:normal">0</div>
<div class="t" style="left:27px;top:99px;font-size:7px;line-height:7px;color:#a8a8a8;font-weight:normal">2</div>
<div class="t" style="left:27px;top:133px;font-size:7px;line-height:7px;color:#a8a8a8;font-weight:normal">4</div>
<div class="t" style="left:27px;top:167px;font-size:7px;line-height:7px;color:#a8a8a8;font-weight:normal">6</div>
<div class="t" style="left:27px;top:201px;font-size:7px;line-height:7px;color:#a8a8a8;font-weight:normal">8</div>
<div class="t" style="left:27px;top:235px;font-size:7px;line-height:7px;color:#a8a8a8;font-weight:normal">1<br>0</div>
<div class="t" style="left:27px;top:269px;font-size:7px;line-height:7px;color:#a8a8a8;font-weight:normal">1<br>2</div>
<div class="t" style="left:27px;top:303px;font-size:7px;line-height:7px;color:#a8a8a8;font-weight:normal">1<br>4</div>
<div class="t" style="left:27px;top:337px;font-size:7px;line-height:7px;color:#a8a8a8;font-weight:normal">1<br>6</div>
<div class="t" style="left:27px;top:372px;font-size:7px;line-height:7px;color:#a8a8a8;font-weight:normal">1<br>8</div>
<div class="t" style="left:27px;top:406px;font-size:7px;line-height:7px;color:#a8a8a8;font-weight:normal">2<br>0</div>
<div class="t" style="left:27px;top:440px;font-size:7px;line-height:7px;color:#a8a8a8;font-weight:normal">2<br>2</div>
<div class="a" style="left:36px;top:62px;width:788px;height:387px;background:#282828"></div>
<div class="a" style="left:70px;top:63px;width:719px;height:386px;background:#fff"></div>
<div class="a" style="left:789px;top:63px;width:1px;height:386px;background:#161616"></div>
<svg class="a" style="left:0;top:0" width="1000" height="449"><path fill="#000" d="M420.2 270.0 Q514.7 297.6 609.2 270.0 Q539.4 338.8 514.7 433.7 Q491.4 338.0 420.2 270.0Z M420.2 270.0 Q443.5 365.6 514.7 433.7 Q420.2 407.7 325.7 433.7 Q396.9 365.6 420.2 270.0Z M420.2 270.0 Q349.0 338.0 325.7 433.7 Q301.0 338.8 231.2 270.0 Q325.7 297.6 420.2 270.0Z M420.2 270.0 Q325.7 242.4 231.2 270.0 Q301.0 201.2 325.7 106.3 Q349.0 202.0 420.2 270.0Z M420.2 270.0 Q396.9 174.4 325.7 106.3 Q420.2 132.3 514.7 106.3 Q443.5 174.4 420.2 270.0Z M420.2 270.0 Q491.4 202.0 514.7 106.3 Q539.4 201.2 609.2 270.0 Q514.7 242.4 420.2 270.0Z"/><rect x="323.5" y="104.5" width="3" height="3" fill="#111"/><rect x="512.5" y="104.5" width="3" height="3" fill="#111"/></svg>
<div class="a" style="left:824px;top:38px;width:9px;height:12px;background:#393939"></div>
<div class="a" style="left:824px;top:50px;width:9px;height:399px;background:linear-gradient(90deg,#383838,#444)"></div>
<div class="a" style="left:833px;top:38px;width:2px;height:411px;background:#303030"></div>
<div class="a" style="left:835px;top:38px;width:22px;height:411px;background:#4d4d4d"></div>
<div class="a" style="left:835px;top:130px;width:4px;height:319px;background:#545454"></div>
<div class="a" style="left:835px;top:38px;width:22px;height:8px;background:#3c3c3c"></div>
<svg class="a" style="left:848px;top:39px" width="9" height="6"><path d="M3 0 L0 3 L3 6Z M5 0 L8 3 L5 6Z" fill="#d0d0d0"/></svg>
<div class="a" style="left:857px;top:38px;width:2px;height:411px;background:#2e2e2e"></div>
<div class="a" style="left:836px;top:46px;width:20px;height:21px;background:#535353;border:1px solid #3e3e3e"></div>
<div class="a" style="left:836px;top:69px;width:20px;height:22px;background:#535353;border:1px solid #3e3e3e"></div>
<div class="a" style="left:836px;top:94px;width:20px;height:36px;background:#535353;border:1px solid #3e3e3e"></div>
<svg class="a" style="left:838px;top:48px" width="16" height="80"><rect x="2" y="3" width="4" height="3" fill="#ccc"/><rect x="2" y="8" width="4" height="6" fill="#ddd"/><rect x="3" y="15" width="2" height="2" fill="#eee"/><path d="M9 7 q3 0 3 4 q0 3 -2 4" stroke="#ddd" stroke-width="1.5" fill="none"/><rect x="2" y="27" width="5" height="4" fill="#ddd"/><rect x="9" y="27" width="3" height="2" fill="#ddd"/><rect x="9" y="30" width="3" height="2" fill="#ddd"/><rect x="2" y="33" width="10" height="2" fill="#eee"/><text x="2" y="61" font-size="11" fill="#e0e0e0" font-family="Liberation Sans">A</text><rect x="10" y="52" width="1" height="9" fill="#c8a040"/><text x="3" y="78" font-size="10" fill="#e0e0e0" font-family="Liberation Sans" font-weight="bold">¶</text></svg>
<div class="a" style="left:859px;top:38px;width:141px;height:411px;background:#484848"></div>
<div class="a" style="left:859px;top:38px;width:141px;height:8px;background:#3a3a3a"></div>
<svg class="a" style="left:988px;top:39px" width="9" height="6"><path d="M3 0 L0 3 L3 6Z M5 0 L8 3 L5 6Z" fill="#d0d0d0"/></svg>
<div class="a" style="left:990px;top:46px;width:6px;height:403px;background:#454545"></div>
<div class="a" style="left:989px;top:46px;width:1px;height:403px;background:#3a3a3a"></div>
<div class="a" style="left:996px;top:38px;width:1px;height:411px;background:#353535"></div>
<div class="a" style="left:859px;top:46px;width:129px;height:10px;background:#3e3e3e"></div>
<div class="a" style="left:860px;top:46px;width:18px;height:10px;background:#525252"></div>
<div id="t52" class="t" style="left:862px;top:46px;font-size:8px;line-height:10px;color:#e4e4e4;transform:scaleX(0.875);transform-origin:0 0;">颜色</div>
<div id="t53" class="t" style="left:884px;top:46px;font-size:8px;line-height:10px;color:#a8a8a8;transform:scaleX(0.812);transform-origin:0 0;">色板</div>
<svg class="a" style="left:986px;top:48px" width="9" height="6"><path d="M0 1 L3 3 L0 5Z" fill="#ccc"/><rect x="4" y="1" width="4" height="1" fill="#ccc"/><rect x="4" y="3" width="4" height="1" fill="#ccc"/><rect x="4" y="5" width="4" height="1" fill="#ccc"/></svg>
<div class="a" style="left:867px;top:67px;width:11px;height:11px;background:#fff;border:1px solid #888"></div>
<div class="a" style="left:862px;top:62px;width:10px;height:10px;background:#000;border:1px solid #a0a0a0"></div>
<div id="t54" class="t" style="left:883px;top:62px;font-size:6px;line-height:8px;color:#d0d0d0;">R</div>
<svg class="a" style="left:890px;top:67px" width="6" height="5"><path d="M3 0 L6 5 L0 5Z" fill="#d0d0d0"/></svg>
<div class="a" style="left:893px;top:63px;width:65px;height:3px;background:linear-gradient(90deg,#000,#e03a3a);border-radius:1px"></div>
<div class="a" style="left:960px;top:62px;width:24px;height:11px;background:#434343;border:1px solid #3a3a3a"></div>
<div id="t55" class="t" style="left:963px;top:63px;font-size:8px;line-height:10px;color:#e6e6e6;">0</div>
<div id="t56" class="t" style="left:883px;top:76px;font-size:6px;line-height:8px;color:#d0d0d0;">G</div>
<svg class="a" style="left:890px;top:81px" width="6" height="5"><path d="M3 0 L6 5 L0 5Z" fill="#d0d0d0"/></svg>
<div class="a" style="left:893px;top:77px;width:65px;height:3px;background:linear-gradient(90deg,#000,#3ac03a);border-radius:1px"></div>
<div class="a" style="left:960px;top:76px;width:24px;height:11px;background:#434343;border:1px solid #3a3a3a"></div>
<div id="t57" class="t" style="left:963px;top:77px;font-size:8px;line-height:10px;color:#e6e6e6;">0</div>
<div id="t58" class="t" style="left:883px;top:90px;font-size:6px;line-height:8px;color:#d0d0d0;">B</div>
<svg class="a" style="left:890px;top:95px" width="6" height="5"><path d="M3 0 L6 5 L0 5Z" fill="#d0d0d0"/></svg>
<div class="a" style="left:893px;top:91px;width:65px;height:3px;background:linear-gradient(90deg,#000,#3a3ae0);border-radius:1px"></div>
<div class="a" style="left:960px;top:90px;width:24px;height:11px;background:#434343;border:1px solid #3a3a3a"></div>
<div id="t59" class="t" style="left:963px;top:91px;font-size:8px;line-height:10px;color:#e6e6e6;">0</div>
<div class="a" style="left:861px;top:107px;width:126px;height:9px;background:linear-gradient(90deg,#ff0000,#ffff00 17%,#00ff00 33%,#00ffff 50%,#0000ff 67%,#ff00ff 83%,#ff0000)"></div>
<div class="a" style="left:861px;top:107px;width:126px;height:9px;background:linear-gradient(180deg,rgba(255,255,255,.25),rgba(0,0,0,0) 45%,rgba(0,0,0,.35))"></div>
<div class="a" style="left:983px;top:107px;width:4px;height:5px;background:#fff"></div>
<div class="a" style="left:983px;top:112px;width:4px;height:4px;background:#000"></div>
<div class="a" style="left:859px;top:116px;width:129px;height:5px;background:#3a3a3a"></div>
<div class="a" style="left:859px;top:121px;width:129px;height:10px;background:#3e3e3e"></div>
<div class="a" style="left:860px;top:121px;width:18px;height:10px;background:#525252"></div>
<div id="t60" class="t" style="left:864px;top:121px;font-size:8px;line-height:10px;color:#e4e4e4;transform:scaleX(0.750);transform-origin:0 0;">调整</div>
<div id="t61" class="t" style="left:885px;top:121px;font-size:8px;line-height:10px;color:#a8a8a8;transform:scaleX(0.688);transform-origin:0 0;">样式</div>
<svg class="a" style="left:986px;top:123px" width="9" height="6"><path d="M0 1 L3 3 L0 5Z" fill="#ccc"/><rect x="4" y="1" width="4" height="1" fill="#ccc"/><rect x="4" y="3" width="4" height="1" fill="#ccc"/><rect x="4" y="5" width="4" height="1" fill="#ccc"/></svg>
<div id="t62" class="t" style="left:864px;top:134px;font-size:8px;line-height:10px;color:#e0e0e0;transform:scaleX(0.844);transform-origin:0 0;">添加调整</div>
<svg class="a" style="left:0;top:0" width="1000" height="449"><defs><linearGradient id="gm"><stop offset="0" stop-color="#333"/><stop offset="1" stop-color="#eee"/></linearGradient></defs><g stroke="#dcdcdc" stroke-width="1.2"><path d="M891 150 V158 M887 154 H895 M888 151 L894 157 M894 151 L888 157"/></g><circle cx="891" cy="154" r="2" fill="#dcdcdc"/><path d="M900 158 V153 L902 155 L904 152 L906 155 L908 152 L910 154 V158Z" fill="#dcdcdc"/><rect x="914.5" y="151.5" width="9" height="7" fill="#777" stroke="#dcdcdc"/><path d="M915 158 L923 152" stroke="#fff" stroke-width="1.2"/><rect x="928.5" y="150.5" width="9" height="8" fill="#8a8a8a" stroke="#dcdcdc"/><path d="M929 158 L937 151" stroke="#fff" stroke-width="1.5"/><path d="M929 151 H933" stroke="#fff"/><path d="M943 150 H952 L947.5 158Z" fill="none" stroke="#dcdcdc" stroke-width="1.6"/><rect x="880" y="166" width="9" height="8" fill="#999"/><rect x="880" y="166" width="9" height="3" fill="#eee"/><rect x="880" y="171" width="9" height="2" fill="#555"/><path d="M897.5 166 V174 M893 174 H902 M894 169 L896 172 H892Z M901 169 L903 172 H899Z M894 168 H901" stroke="#dcdcdc" stroke-width="1" fill="none"/><rect x="907.5" y="166.5" width="9" height="8" fill="#666" stroke="#dcdcdc"/><rect x="912" y="167" width="4" height="7" fill="#eee"/><circle cx="925" cy="170" r="3.5" fill="#999" stroke="#dcdcdc"/><rect x="921" y="166" width="4" height="4" fill="#eee"/><circle cx="937" cy="168" r="2.5" fill="#dcdcdc"/><circle cx="941" cy="168" r="2.5" fill="#bbb"/><circle cx="939" cy="172" r="2.5" fill="#eee"/><g fill="#bbb"><rect x="949" y="166" width="2" height="2"/><rect x="952" y="166" width="2" height="2"/><rect x="955" y="166" width="2" height="2"/><rect x="949" y="169" width="2" height="2"/><rect x="952" y="169" width="2" height="2"/><rect x="955" y="169" width="2" height="2"/><rect x="949" y="172" width="2" height="2"/><rect x="952" y="172" width="2" height="2"/><rect x="955" y="172" width="2" height="2"/></g><rect x="886.5" y="181.5" width="9" height="7" fill="#ddd" stroke="#dcdcdc"/><rect x="888" y="183" width="5" height="4" fill="#444"/><rect x="900.5" y="181.5" width="9" height="7" fill="#888" stroke="#dcdcdc"/><path d="M901 188 L909 182" stroke="#333" stroke-width="1.5"/><rect x="914.5" y="181.5" width="9" height="7" fill="#eee" stroke="#dcdcdc"/><path d="M915 186 L918 184 L920 186 L923 183" stroke="#333" stroke-width="1.5" fill="none"/><rect x="928.5" y="181.5" width="9" height="7" fill="#ccc" stroke="#dcdcdc"/><path d="M930 183 L933 186 L936 183Z" fill="#333"/><rect x="942.5" y="181.5" width="9" height="7" fill="url(#gm)" stroke="#dcdcdc"/></svg>
<div class="a" style="left:859px;top:196px;width:129px;height:2px;background:#3a3a3a"></div>
<div class="a" style="left:859px;top:198px;width:129px;height:10px;background:#3e3e3e"></div>
<div class="a" style="left:860px;top:198px;width:17px;height:10px;background:#525252"></div>
<div id="t63" class="t" style="left:862px;top:198px;font-size:8px;line-height:10px;color:#e4e4e4;transform:scaleX(0.875);transform-origin:0 0;">图层</div>
<div id="t64" class="t" style="left:884px;top:198px;font-size:8px;line-height:10px;color:#a8a8a8;transform:scaleX(0.812);transform-origin:0 0;">通道</div>
<div id="t65" class="t" style="left:906px;top:198px;font-size:8px;line-height:10px;color:#a8a8a8;transform:scaleX(0.750);transform-origin:0 0;">路径</div>
<svg class="a" style="left:986px;top:200px" width="9" height="6"><path d="M0 1 L3 3 L0 5Z" fill="#ccc"/><rect x="4" y="1" width="4" height="1" fill="#ccc"/><rect x="4" y="3" width="4" height="1" fill="#ccc"/><rect x="4" y="5" width="4" height="1" fill="#ccc"/></svg>
<div class="a" style="left:861px;top:211px;width:42px;height:11px;background:#5a5a5a;border:1px solid #3c3c3c"></div>
<div id="t66" class="t" style="left:865px;top:211px;font-size:8px;line-height:10px;color:#e0e0e0;transform:scaleX(0.993);transform-origin:0 0;">ρ 类型</div>
<svg class="a" style="left:897px;top:213px" width="4" height="7"><path d="M0 2.5 L2 0 L4 2.5Z M0 4.5 L2 7 L4 4.5Z" fill="#cfcfcf"/></svg>
<svg class="a" style="left:910px;top:210px" width="72" height="13"><rect x="4" y="3" width="8" height="7" fill="#bdbdbd" stroke="#e0e0e0"/><path d="M5 9 L8 6 L11 9Z" fill="#444"/><rect x="5" y="4" width="2" height="2" fill="#444"/><circle cx="21" cy="6.5" r="3.8" fill="#d8d8d8"/><path d="M21 6.5 L24 3 A4 4 0 0 0 18 4Z" fill="#555"/><path d="M32 2.5 H38 M35 2.5 V10" stroke="#d8d8d8" stroke-width="1.6"/><path d="M46 3 H53 V10 H46Z" fill="none" stroke="#d8d8d8" stroke-width="1.4"/><rect x="48" y="5" width="3" height="3" fill="#888"/><rect x="60" y="6" width="7" height="5" fill="#d8d8d8"/><path d="M61.5 6 V4 A2 2 0 0 1 65.5 4 V6" stroke="#d8d8d8" stroke-width="1.2" fill="none"/></svg>
<div class="a" style="left:989px;top:211px;width:5px;height:11px;background:#2a2a2a;border:1px solid #6a6a6a"></div>
<div class="a" style="left:990px;top:212px;width:3px;height:3px;background:#aaa"></div>
<div class="a" style="left:861px;top:226px;width:64px;height:11px;background:#5a5a5a;border:1px solid #3c3c3c"></div>
<div id="t67" class="t" style="left:864px;top:226px;font-size:8px;line-height:10px;color:#e0e0e0;transform:scaleX(0.875);transform-origin:0 0;">正常</div>
<svg class="a" style="left:919px;top:228px" width="4" height="7"><path d="M0 2.5 L2 0 L4 2.5Z M0 4.5 L2 7 L4 4.5Z" fill="#cfcfcf"/></svg>
<div id="t68" class="t" style="left:929px;top:227px;font-size:8px;line-height:10px;color:#dcdcdc;transform:scaleX(0.894);transform-origin:0 0;">不透明度:</div>
<div class="a" style="left:962px;top:226px;width:21px;height:11px;background:#383838;border:1px solid #2e2e2e"></div>
<div id="t69" class="t" style="left:964px;top:227px;font-size:8px;line-height:10px;color:#e6e6e6;transform:scaleX(0.831);transform-origin:0 0;">100%</div>
<div class="a" style="left:984px;top:226px;width:10px;height:11px;background:#5e5e5e;border:1px solid #3a3a3a"></div>
<svg class="a" style="left:986px;top:230px" width="6" height="4"><path d="M0 0 L6 0 L3 3Z" fill="#ddd"/></svg>
<div id="t70" class="t" style="left:862px;top:242px;font-size:8px;line-height:10px;color:#dcdcdc;transform:scaleX(0.964);transform-origin:0 0;">锁定:</div>
<svg class="a" style="left:883px;top:242px" width="50" height="10"><rect x="1" y="1" width="7" height="7" fill="#777" stroke="#aaa" stroke-width="1"/><path d="M14 9 L22 1" stroke="#bbb" stroke-width="1.5"/><path d="M31 1 V9 M27 5 H35" stroke="#ccc" stroke-width="1.2"/><rect x="41" y="4" width="6" height="5" fill="#ccc"/><path d="M42 4 V2.5 A2 2 0 0 1 46 2.5 V4" stroke="#ccc" fill="none"/></svg>
<div id="t71" class="t" style="left:943px;top:242px;font-size:8px;line-height:10px;color:#dcdcdc;transform:scaleX(0.910);transform-origin:0 0;">填充:</div>
<div class="a" style="left:962px;top:240px;width:21px;height:11px;background:#383838;border:1px solid #2e2e2e"></div>
<div id="t72" class="t" style="left:964px;top:241px;font-size:8px;line-height:10px;color:#e6e6e6;transform:scaleX(0.831);transform-origin:0 0;">100%</div>
<div class="a" style="left:984px;top:240px;width:10px;height:11px;background:#5e5e5e;border:1px solid #3a3a3a"></div>
<svg class="a" style="left:986px;top:244px" width="6" height="4"><path d="M0 0 L6 0 L3 3Z" fill="#ddd"/></svg>
<div class="a" style="left:859px;top:255px;width:129px;height:1px;background:#3a3a3a"></div>
<div class="a" style="left:875px;top:257px;width:113px;height:17px;background:linear-gradient(180deg,#7089aa,#64799a)"></div>
<div class="a" style="left:859px;top:257px;width:16px;height:18px;background:#474747"></div>
<svg class="a" style="left:861px;top:262px" width="10" height="7"><path d="M0.5 3.5 Q5 -1 9.5 3.5 Q5 8 0.5 3.5Z" fill="none" stroke="#ddd" stroke-width="1"/><circle cx="5" cy="3.5" r="1.4" fill="#ddd"/></svg>
<div class="a" style="left:876px;top:258px;width:21px;height:15px;background:#f4f4f6;border:1px solid #c8d2e4"></div>
<svg class="a" style="left:877px;top:259px" width="19" height="13"><path d="M9 1.5 Q6 4 4 6 L7 8 Q8 10 10 11 L11 9 L9 7 Q11 4 12 2.5Z" fill="#000"/><rect x="12" y="1" width="7" height="11" fill="#8a98b0"/><path d="M13 3 H18 M13 5 V11 M15 5 V11 M17 5 V11" stroke="#dfe6f2" stroke-width="0.8"/></svg>
<div id="t73" class="t" style="left:901px;top:260px;font-size:8px;line-height:10px;color:#c4d4f4;transform:scaleX(0.880);transform-origin:0 0;font-weight:normal">多边形 1</div>
<div class="a" style="left:859px;top:274px;width:129px;height:1px;background:#3e3e3e"></div>
<div class="a" style="left:875px;top:275px;width:113px;height:14px;background:#4a4a4a"></div>
<svg class="a" style="left:861px;top:280px" width="10" height="7"><path d="M0.5 3.5 Q5 -1 9.5 3.5 Q5 8 0.5 3.5Z" fill="none" stroke="#ddd" stroke-width="1"/><circle cx="5" cy="3.5" r="1.4" fill="#ddd"/></svg>
<div class="a" style="left:879px;top:277px;width:18px;height:13px;background:#fff"></div>
<div id="t74" class="t" style="left:902px;top:278px;font-size:8px;line-height:10px;color:#e0e0e0;transform:scaleX(1.000);transform-origin:0 0;font-style:italic">背景</div>
<svg class="a" style="left:972px;top:278px" width="8" height="10"><rect x="1" y="4" width="6" height="5" fill="#ccc"/><path d="M2 4 V2.5 A2 2 0 0 1 6 2.5 V4" stroke="#ccc" fill="none"/></svg>
<div class="a" style="left:859px;top:289px;width:129px;height:2px;background:#3c3c3c"></div>
<div class="a" style="left:812px;top:414px;width:12px;height:35px;background:linear-gradient(90deg,#343434,#424242);border-top-left-radius:6px"></div>
<div class="a" style="left:824px;top:414px;width:21px;height:35px;background:#525252"></div>
<div class="a" style="left:845px;top:414px;width:2px;height:35px;background:#2e2e2e"></div>
<div class="a" style="left:847px;top:414px;width:12px;height:35px;background:#484848"></div>
</body></html>
